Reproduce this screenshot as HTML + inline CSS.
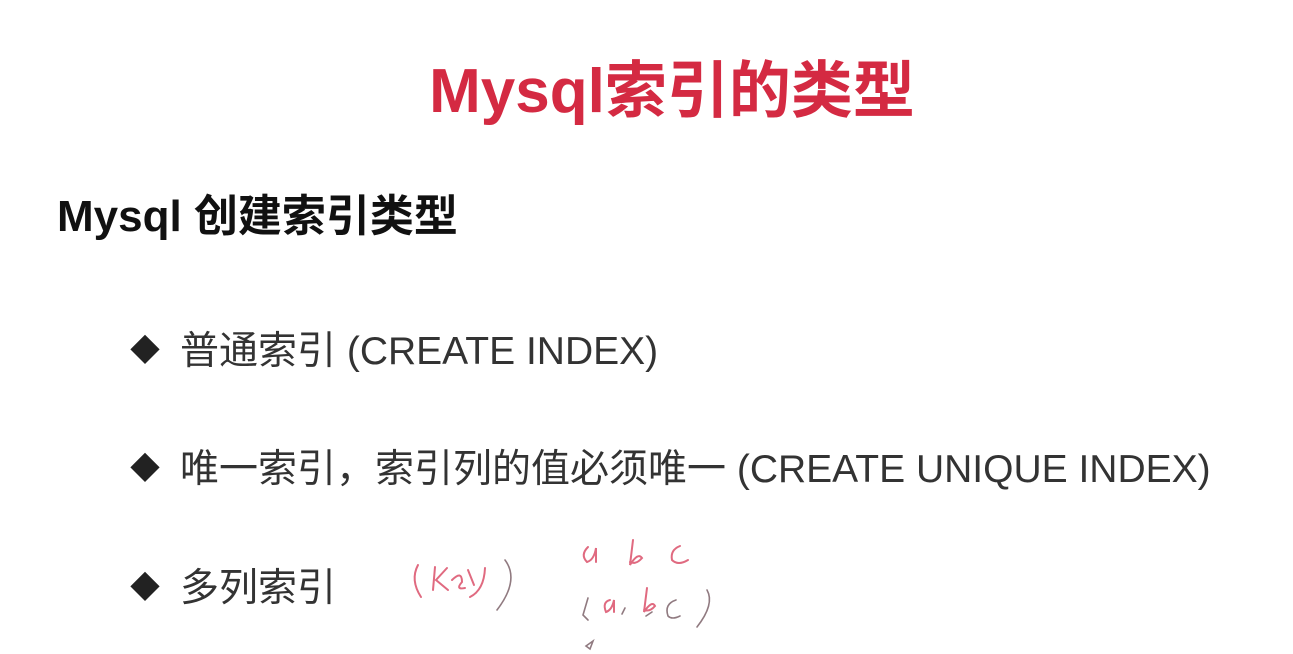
<!DOCTYPE html>
<html><head><meta charset="utf-8"><style>
body{margin:0;width:1293px;height:654px;background:#fff;overflow:hidden;position:relative;font-family:"Liberation Sans","Noto Sans CJK SC",sans-serif}
.t{position:absolute;left:0;width:1344px;text-align:center;top:40px;font-size:62px;font-weight:bold;color:#d42a42}
.s{position:absolute;left:57px;top:180px;font-size:44px;font-weight:bold;color:#111}
.b{position:absolute;left:130px;font-size:39px;color:#333;white-space:nowrap}
.b span{display:inline-block;width:50px;font-size:30px;color:#222;vertical-align:3px}
</style></head><body>
<div class="t">Mysql索引的类型</div>
<div class="s">Mysql 创建索引类型</div>
<div class="b" style="top:320px"><span>◆</span>普通索引 (CREATE INDEX)</div>
<div class="b" style="top:438px"><span>◆</span>唯一索引，索引列的值必须唯一 (CREATE UNIQUE INDEX)</div>
<div class="b" style="top:557px"><span>◆</span>多列索引</div>
<svg width="1293" height="654" style="position:absolute;left:0;top:0" fill="none" stroke-linecap="round">
<g stroke="#e06a80" stroke-width="2">
<path d="M418 565 Q410 580 421 597"/><path d="M435 567 L433 590 M447 568 L436 580 L448 590"/>
<path d="M452 580 Q462 570 462 582 Q455 590 465 588"/>
<path d="M468 570 L474 585 M485 568 Q484 590 470 597"/>
<path d="M588 547 Q580 555 587 562 Q594 560 596 548 L596 562"/>
<path d="M633 540 L630 565 Q638 552 642 558 Q636 565 630 562"/>
<path d="M680 546 Q670 550 672 560 Q678 566 688 560"/>
<path d="M610 600 Q602 602 606 612 Q612 610 614 600 L614 612"/>
<path d="M647 588 L644 612 Q652 600 655 606 Q650 612 644 610"/>
</g>
<g stroke="#907a80" stroke-width="1.6">
<path d="M505 560 Q520 580 497 610"/>
<path d="M588 598 L583 615 L588 620"/><path d="M625 608 L622 614"/>
<path d="M646 616 L652 612"/><path d="M676 600 Q664 604 668 616 Q672 620 680 616"/>
<path d="M707 590 Q715 604 697 627"/><path d="M586 646 L593 641 L590 649 Z"/>
</g>
</svg>
</body></html>
